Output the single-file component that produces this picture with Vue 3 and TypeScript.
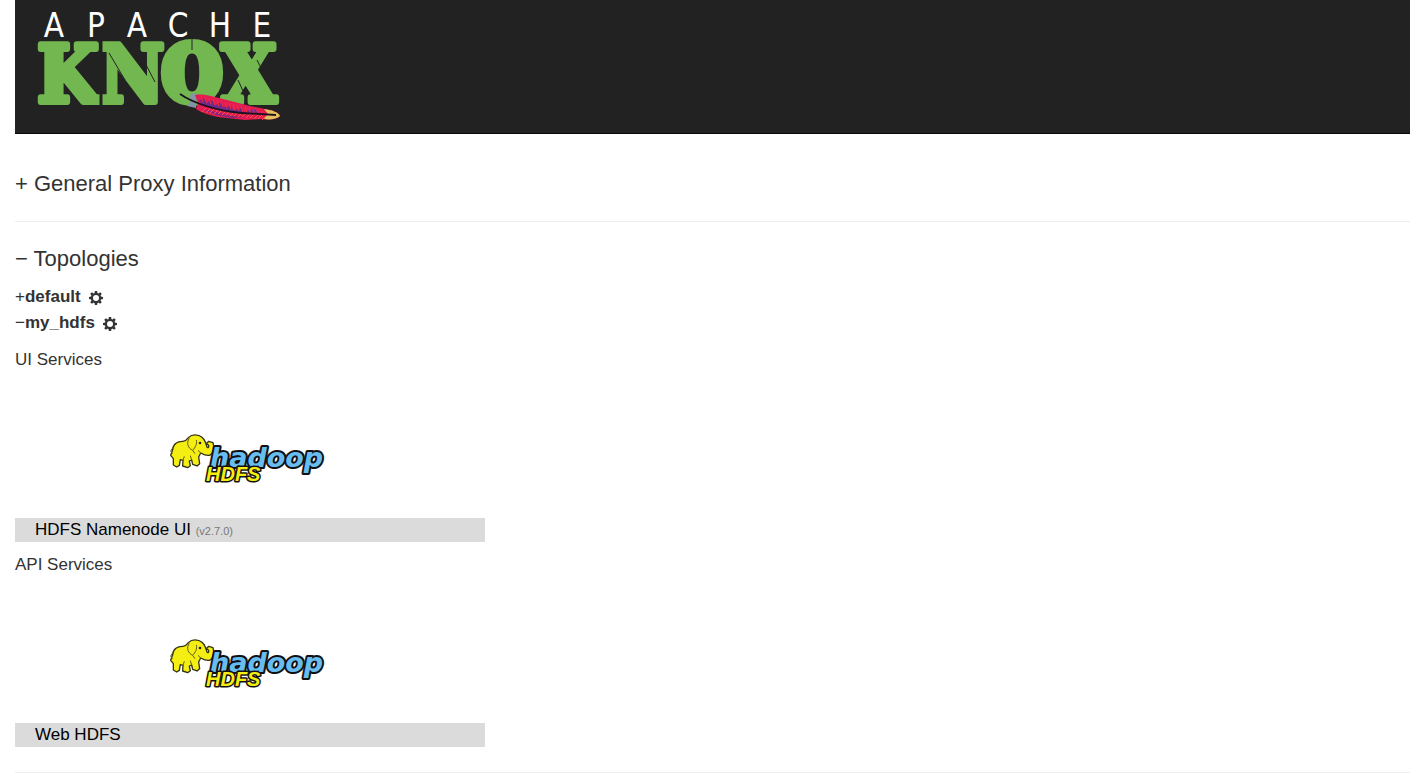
<script setup lang="ts">
import { ref } from 'vue'

interface Service {
  name: string
  version?: string
}
interface ServiceGroup {
  title: string
  services: Service[]
}
interface Topology {
  name: string
  open: boolean
  groups: ServiceGroup[]
}

const infoOpen = ref(false)
const topologiesOpen = ref(true)
const topologies = ref<Topology[]>([
  { name: 'default', open: false, groups: [] },
  {
    name: 'my_hdfs',
    open: true,
    groups: [
      { title: 'UI Services', services: [{ name: 'HDFS Namenode UI', version: '(v2.7.0)' }] },
      { title: 'API Services', services: [{ name: 'Web HDFS' }] },
    ],
  },
])
const teeth = [0, 45, 90, 135, 180, 225, 270, 315]
const barbs = Array.from({ length: 16 }, (_, i) => i)
</script>

<template>
  <div class="page">
    <header class="navbar">
      <a href="#" class="brand" aria-label="Apache Knox">
        <svg class="logo" viewBox="15 0 280 133">
          <g class="apache">
            <text x="54" y="37">A</text>
            <text x="96" y="37">P</text>
            <text x="137" y="37">A</text>
            <text x="178" y="37">C</text>
            <text x="220" y="37">H</text>
            <text x="262" y="37">E</text>
          </g>
          <g class="knox">
            <text x="68" y="102">K</text>
            <text x="132" y="102">N</text>
            <text x="249" y="102">X</text>
            <text class="round" x="192" y="100">O</text>
          </g>
          <g class="slits">
            <path d="M192 39V50M192 94V107M109 53L125 80M144 61L155 82M238 80L243 91M257 60L263 72" />
            <path class="gap" d="M101 39V106" />
          </g>
          <g>
            <path d="M190 96L192 93L197 95L196 108L187 106L191 101Z" fill="#8494a4" />
            <path d="M195 95C200 94 206 95 211 96L231 101L250 106L265 109C272 110 278 112 280 116C278 119 271 120 262 119L245 120L218 117C209 115 202 113 196 109L198 103Z" fill="#e51b52" />
            <path d="M199 101L203 98L207 102L212 100L215 105L221 103L224 107L231 106L233 110L242 108L244 112L254 109L260 114L236 113L214 108L204 105Z" fill="#74298c" />
            <path d="M201 109L216 112L232 116L246 117L232 118L216 115Z" fill="#8a2681" />
            <path d="M264 109C272 110 278 112 280 116C277 119 270 120 264 119L268 114Z" fill="#e5c15e" />
            <path v-for="i in barbs" :key="`top-${i}`" :d="`M${201 + i * 4} ${96 + i}l2 6`" stroke="#f0303f" stroke-width="1" />
            <path v-for="i in barbs" :key="`low-${i}`" :d="`M${202 + i * 4} ${112 + Math.round(i * 0.5)}l4 -4`" stroke="#f4574a" stroke-width="1" />
            <path d="M180 94C193 103 217 111 242 113L276 115" fill="none" stroke="#1b1420" stroke-width="1.8" />
          </g>
        </svg>
      </a>
    </header>

    <main>
      <section class="info">
        <h1><button type="button" :aria-expanded="infoOpen" @click="infoOpen = !infoOpen">{{ infoOpen ? '−' : '+' }} General Proxy Information</button></h1>
      </section>
      <hr />
      <section class="topologies">
        <h1><button type="button" :aria-expanded="topologiesOpen" @click="topologiesOpen = !topologiesOpen">{{ topologiesOpen ? '−' : '+' }} Topologies</button></h1>
        <template v-if="topologiesOpen">
          <article v-for="topology in topologies" :key="topology.name">
            <div class="topology">
              <button type="button" :aria-expanded="topology.open" @click="topology.open = !topology.open">{{ topology.open ? '−' : '+' }}<strong>{{ topology.name }}</strong></button>
              <button type="button" class="cog" :aria-label="`Settings for ${topology.name}`">
                <svg viewBox="-7 -7 14 14">
                  <circle r="4.1" fill="none" stroke="#333" stroke-width="2.2" />
                  <path v-for="angle in teeth" :key="angle" d="M-1.5 -4.8L-1.1 -7H1.1L1.5 -4.8Z" fill="#333" :transform="`rotate(${angle})`" />
                </svg>
              </button>
            </div>
            <div v-if="topology.open" class="groups">
              <section v-for="group in topology.groups" :key="group.title" class="group">
                <h2>{{ group.title }}</h2>
                <a v-for="service in group.services" :key="service.name" href="#" class="card">
                  <span class="art">
                    <svg class="hadoop" viewBox="165 425 170 65" aria-label="Hadoop HDFS">
                      <g transform="translate(165 425) scale(.3333)">
                        <path class="hide" d="M23 74C24 57 38 48 54 49C62 48 65 45 71 37C80 27 100 27 111 37C121 44 122 56 126 66C129 70 132 68 131 61L124 56L131 49L144 53C149 67 146 85 134 91C123 93 114 88 107 84L101 96L104 116L96 123L83 118L80 105L73 108L76 122L68 128L53 123L54 106L46 104L43 121L35 126L25 120L25 101L17 91Z" />
                        <path class="crease" d="M73 40C63 53 69 70 83 76C91 67 97 57 94 45M83 76L90 86M25 66L17 78L22 86M54 106L58 94M80 105L76 92M107 84L99 76" />
                        <circle cx="105" cy="54" r="4" fill="#222" />
                      </g>
                      <text class="hadoop-word" x="210" y="467">hadoop</text>
                      <text class="hdfs-word" x="206" y="481">HDFS</text>
                    </svg>
                  </span>
                  <span class="label">{{ service.name }} <small v-if="service.version">{{ service.version }}</small></span>
                </a>
              </section>
            </div>
          </article>
        </template>
      </section>
      <hr />
    </main>
  </div>
</template>

<style>
body {
  margin: 0;
  background: #fff;
}
</style>

<style scoped>
.page {
  padding-left: 15px;
  color: #333;
  font-family: "Liberation Sans", Arial, sans-serif;
  font-size: 17px;
  line-height: 20px;
}
.navbar {
  background: #222;
  border-bottom: 1px solid #080808;
}
.brand,
.logo {
  display: block;
  width: 280px;
}
.apache text {
  fill: #fff;
  font-family: "DejaVu Sans Condensed", "DejaVu Sans", sans-serif;
  font-size: 33px;
  text-anchor: middle;
}
.knox text {
  fill: #73b751;
  stroke: #73b751;
  stroke-width: 6px;
  stroke-linejoin: round;
  font-family: "DejaVu Serif Condensed", "DejaVu Serif", serif;
  font-weight: bold;
  font-size: 78px;
  text-anchor: middle;
}
.knox .round {
  stroke-width: 10px;
  font-size: 74px;
}
.slits path {
  fill: none;
  stroke: #222;
  stroke-width: 1px;
}
.slits .gap {
  stroke-width: 3px;
}
button {
  padding: 0;
  border: 0;
  background: none;
  color: inherit;
  font: inherit;
  cursor: pointer;
}
h1,
h2 {
  margin: 0;
  font-weight: normal;
}
h1 {
  font-size: 22px;
  line-height: 24px;
}
h1 button {
  display: block;
}
hr {
  margin: 25px 0;
  border: 0;
  border-top: 1px solid #eee;
}
.info {
  padding-top: 38px;
}
.topologies h1 {
  margin-bottom: 13px;
}
.topology {
  display: flex;
  align-items: center;
  gap: 8px;
  height: 26px;
}
.cog {
  width: 14px;
  height: 14px;
  margin-top: 2px;
}
.cog svg {
  display: block;
}
.groups {
  padding-top: 1px;
}
.group {
  padding-top: 13px;
}
h2 {
  font-size: 17px;
  line-height: 20px;
}
.card {
  display: block;
  max-width: 470px;
  color: #000;
  text-decoration: none;
}
.art {
  display: flex;
  justify-content: center;
  padding: 55px 0 28px;
}
.hadoop {
  width: 170px;
  height: 65px;
}
.hide {
  fill: #f5ee13;
  stroke: #333318;
  stroke-width: 4px;
  stroke-linejoin: round;
}
.crease {
  fill: none;
  stroke: #5d5a18;
  stroke-width: 3px;
}
.hadoop-word,
.hdfs-word {
  stroke: #111;
  paint-order: stroke;
  stroke-linejoin: round;
  font-weight: bold;
  font-style: italic;
}
.hadoop-word {
  fill: #67bdf0;
  stroke-width: 4px;
  font-family: "DejaVu Sans", sans-serif;
  font-size: 27px;
}
.hdfs-word {
  fill: #f5ee13;
  stroke-width: 3px;
  font-family: "Liberation Sans", Arial, sans-serif;
  font-size: 20px;
}
.label {
  display: block;
  padding: 2px 20px;
  background: #dbdbdb;
}
small {
  color: #777;
  font-size: 11px;
  line-height: 1;
}
</style>
